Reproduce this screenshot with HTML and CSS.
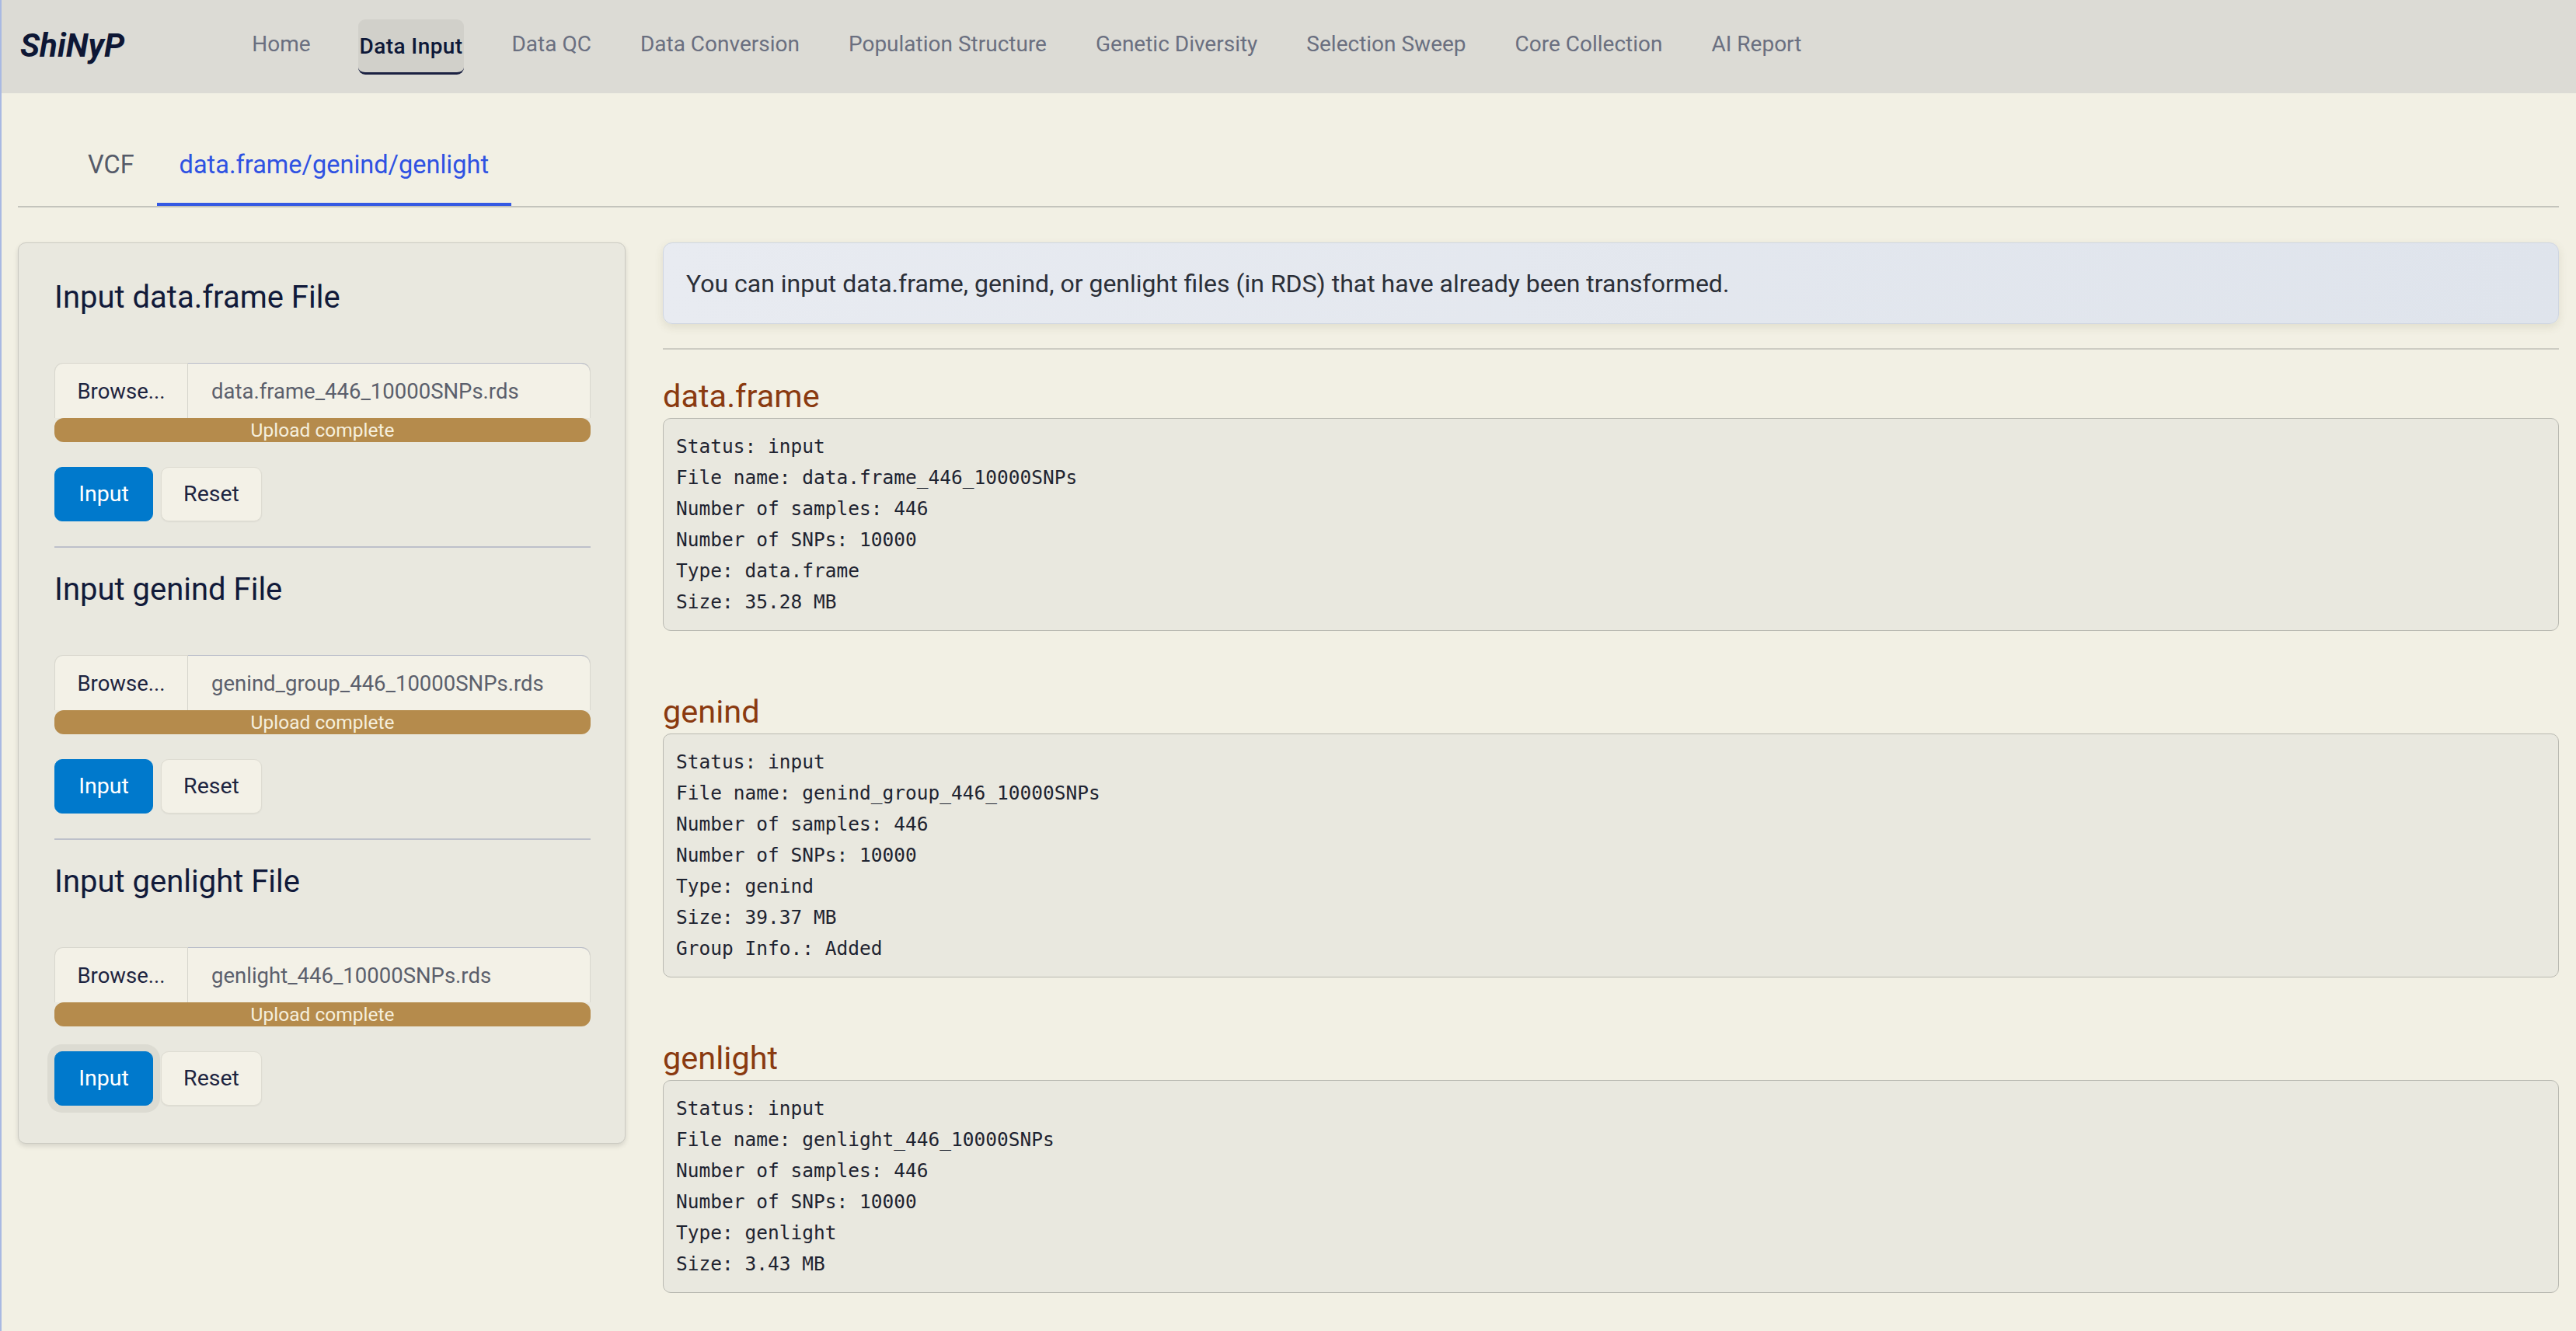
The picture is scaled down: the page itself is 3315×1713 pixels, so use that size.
FILE: index.html
```html
<!DOCTYPE html>
<html lang="en">
<head>
<meta charset="utf-8">
<title>ShiNyP</title>
<link rel="stylesheet" href="styles.css">
</head>
<body>
<nav class="navbar">
  <div class="brand">ShiNyP</div>
  <ul class="nav-links">
    <li class="nav-item">Home</li>
    <li class="nav-item active">Data Input</li>
    <li class="nav-item">Data QC</li>
    <li class="nav-item">Data Conversion</li>
    <li class="nav-item">Population Structure</li>
    <li class="nav-item">Genetic Diversity</li>
    <li class="nav-item">Selection Sweep</li>
    <li class="nav-item">Core Collection</li>
    <li class="nav-item">AI Report</li>
  </ul>
</nav>

<div class="page">
  <ul class="tabs">
    <li class="tab">VCF</li>
    <li class="tab active">data.frame/genind/genlight</li>
  </ul>

  <div class="layout">
    <aside class="card">
      <section class="input-block">
        <h4 class="block-title">Input data.frame File</h4>
        <div class="file-input">
          <span class="browse">Browse...</span>
          <span class="file-name">data.frame_446_10000SNPs.rds</span>
        </div>
        <div class="progress">Upload complete</div>
        <div class="btn-row">
          <button class="btn btn-primary">Input</button>
          <button class="btn btn-default">Reset</button>
        </div>
      </section>
      <hr class="card-rule">
      <section class="input-block">
        <h4 class="block-title">Input genind File</h4>
        <div class="file-input">
          <span class="browse">Browse...</span>
          <span class="file-name">genind_group_446_10000SNPs.rds</span>
        </div>
        <div class="progress">Upload complete</div>
        <div class="btn-row">
          <button class="btn btn-primary">Input</button>
          <button class="btn btn-default">Reset</button>
        </div>
      </section>
      <hr class="card-rule">
      <section class="input-block">
        <h4 class="block-title">Input genlight File</h4>
        <div class="file-input">
          <span class="browse">Browse...</span>
          <span class="file-name">genlight_446_10000SNPs.rds</span>
        </div>
        <div class="progress">Upload complete</div>
        <div class="btn-row">
          <button class="btn btn-primary focused">Input</button>
          <button class="btn btn-default">Reset</button>
        </div>
      </section>
    </aside>

    <main class="main">
      <div class="info">You can input data.frame, genind, or genlight files (in RDS) that have already been transformed.</div>
      <hr class="main-rule">

      <h3 class="out-title">data.frame</h3>
      <pre class="out">Status: input
File name: data.frame_446_10000SNPs
Number of samples: 446
Number of SNPs: 10000
Type: data.frame
Size: 35.28 MB</pre>

      <h3 class="out-title">genind</h3>
      <pre class="out">Status: input
File name: genind_group_446_10000SNPs
Number of samples: 446
Number of SNPs: 10000
Type: genind
Size: 39.37 MB
Group Info.: Added</pre>

      <h3 class="out-title">genlight</h3>
      <pre class="out">Status: input
File name: genlight_446_10000SNPs
Number of samples: 446
Number of SNPs: 10000
Type: genlight
Size: 3.43 MB</pre>
    </main>
  </div>
</div>
</body>
</html>
```

FILE: styles.css
```css
* { box-sizing: border-box; }

html, body {
  margin: 0;
  padding: 0;
}

body {
  background: #f2f0e4;
  font-family: Roboto, "Open Sans", "Noto Sans", sans-serif;
  color: #1b2238;
  border-left: 2px solid #a9b9e2;
  min-height: 100vh;
}

/* ---------- navbar ---------- */
.navbar {
  height: 120px;
  background: #dcdbd5;
  display: flex;
  align-items: center;
  padding-left: 24px;
}

.brand {
  font-size: 42px;
  font-weight: 700;
  font-style: italic;
  color: #0e1735;
  margin-top: -4px;
}

.nav-links {
  list-style: none;
  display: flex;
  align-items: center;
  gap: 59px;
  margin: 0 0 0 162px;
  padding: 0;
}

.nav-item {
  font-size: 28px;
  color: #6a6f80;
  line-height: 1;
  padding: 0 2px;
  margin-top: -6px;
}

.nav-item.active {
  color: #0e1838;
  font-weight: 500;
  letter-spacing: 0.4px;
  background: #d1d0ca;
  border-radius: 9px;
  border-bottom: 3px solid #1b2142;
  padding: 21px 2px 19px;
  margin-top: 0;
}

/* ---------- page ---------- */
.page {
  padding: 0 22px 40px 21px;
}

.tabs {
  list-style: none;
  display: flex;
  margin: 43px 0 0;
  padding: 0 0 0 61px;
  border-bottom: 2px solid #c4c4bc;
}

.tab {
  font-size: 32.5px;
  line-height: 48px;
  padding: 25px 29px 25px;
  color: #555a68;
  border-bottom: 4px solid transparent;
}

.tab.active {
  color: #2f52e2;
  border-bottom-color: #3459e3;
}

.layout {
  display: grid;
  grid-template-columns: 782px 1fr;
  gap: 48px;
  margin-top: 45px;
  align-items: start;
}

/* ---------- left card ---------- */
.card {
  background: #e9e8df;
  border: 1px solid #cbcac2;
  border-radius: 10px;
  box-shadow: 0 3px 6px rgba(0, 0, 0, 0.12);
  padding: 46px 44px 48px 46px;
}

.block-title {
  margin: 0;
  font-size: 40px;
  line-height: 48px;
  font-weight: 400;
  color: #111a3a;
}

.file-input {
  display: flex;
  height: 71px;
  margin-top: 60px;
  background: #f3f1e7;
  border: 1px solid #d8d7ce;
  border-bottom: 0;
  border-radius: 11px 11px 0 0;
  font-size: 27.5px;
}

.browse {
  width: 171px;
  display: flex;
  align-items: center;
  justify-content: center;
  color: #1d2440;
  border-right: 1px solid #d6d5cc;
}

.file-name {
  flex: 1;
  display: flex;
  align-items: center;
  padding-left: 30px;
  color: #5b5f6c;
  border-top: 1px solid #b8bcc9;
  margin-top: -1px;
  border-top-right-radius: 11px;
}

.progress {
  height: 31px;
  background: #b58b4c;
  border-radius: 12px;
  color: #f5efdd;
  font-size: 24.5px;
  line-height: 31px;
  text-align: center;
}

.btn-row {
  display: flex;
  gap: 10px;
  margin-top: 32px;
}

.btn {
  height: 70px;
  border-radius: 10px;
  font-family: inherit;
  font-size: 28.5px;
  padding: 0;
  line-height: 1;
}

.btn-primary {
  background: #0079cc;
  color: #ffffff;
  border: 1px solid #0079cc;
  width: 127px;
}

.btn-default {
  background: #f3f1e7;
  color: #1d2440;
  border: 1px solid #dedcd2;
  width: 130px;
  box-shadow: 0 1px 2px rgba(0, 0, 0, 0.06);
}

.btn.focused {
  box-shadow: 0 0 0 9px rgba(110, 110, 100, 0.1);
}

.card-rule {
  border: 0;
  border-top: 2px solid #bdc0ca;
  margin: 32px 0 30px;
}

/* ---------- right column ---------- */
.main {
  min-width: 0;
  display: flex;
  flex-direction: column;
}

.info {
  height: 105px;
  display: flex;
  align-items: center;
  padding-left: 29px;
  font-size: 32px;
  color: #2b2f38;
  background: linear-gradient(90deg, #e8ebf1, #dfe4ec);
  border: 1px solid #cfd6e1;
  border-radius: 12px;
  box-shadow: 0 4px 12px rgba(90, 80, 40, 0.12);
}

.main-rule {
  width: 100%;
  border: 0;
  border-top: 2px solid #cdccc3;
  margin: 31px 0 0;
}

.out-title {
  margin: 36px 0 4px;
  font-size: 41.5px;
  line-height: 48px;
  font-weight: 400;
  color: #8a3a10;
}

.out {
  margin: 0 0 44px;
  background: #e9e8df;
  border: 1px solid #b9b9b1;
  border-radius: 10px;
  padding: 16px 16px;
  font-family: "DejaVu Sans Mono", "Liberation Mono", monospace;
  font-size: 24.5px;
  line-height: 40px;
  color: #1e2330;
  white-space: pre;
}
```
